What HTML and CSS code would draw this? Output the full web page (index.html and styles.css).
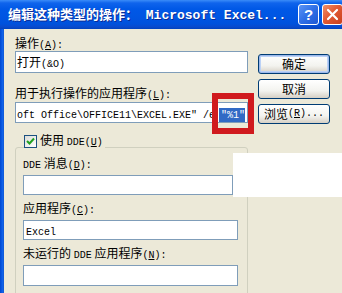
FILE: index.html
```html
<!DOCTYPE html>
<html>
<head>
<meta charset="utf-8">
<link rel="stylesheet" href="styles.css">
</head>
<body>
<div class="win">
  <div class="titlebar">
    <span class="title"><span class="tcn">编辑这种类型的操作：</span><span class="tm"> Microsoft Excel...</span></span>
    <span class="tbtn help">?</span>
    <span class="tbtn close"><svg width="13" height="13" viewBox="0 0 13 13"><path d="M2 2 L11 11 M11 2 L2 11" stroke="#fff" stroke-width="2.2" stroke-linecap="round"/></svg></span>
  </div>
  <div class="frame">
    <div class="edge"></div>
    <div class="content">
      <div class="left">
        <div class="lbl lbl1">操作<span class="m">(<u>A</u>):</span></div>
        <div class="field f1">打开<span class="m">(&amp;O)</span></div>
        <div class="lbl lbl2">用于执行操作的应用程序<span class="m">(<u>L</u>):</span></div>
        <div class="field f2"><span class="m">oft Office\OFFICE11\EXCEL.EXE" /e <span class="sel">"%1"</span></span></div>
        <div class="group">
          <div class="chkrow">
            <span class="chk"><svg width="9" height="9" viewBox="0 0 9 9"><path d="M1 4 L3.5 6.5 L8 1.5" fill="none" stroke="#21A121" stroke-width="2"/></svg></span>
            <span>使用 <span class="m">DDE(<u>U</u>)</span></span>
          </div>
          <div class="lbl g1"><span class="m">DDE</span> 消息<span class="m">(<u>D</u>):</span></div>
          <div class="field gf w1"></div>
          <div class="lbl g2">应用程序<span class="m">(<u>C</u>):</span></div>
          <div class="field gf w2"><span class="m">Excel</span></div>
          <div class="lbl g2">未运行的 <span class="m">DDE</span> 应用程序<span class="m">(<u>N</u>):</span></div>
          <div class="field gf w2 last"></div>
        </div>
      </div>
      <div class="right">
        <div class="btn def">确定</div>
        <div class="btn">取消</div>
        <div class="btn">浏览<span class="m">(<u>R</u>)...</span></div>
      </div>
    </div>
  </div>
  <div class="redbox"></div>
  <div class="patch"></div>
</div>
</body>
</html>
```
FILE: styles.css
```css
html, body { margin: 0; padding: 0; }
body {
  width: 342px;
  height: 293px;
  overflow: hidden;
  background: #ECE9D8;
  font-family: "Noto Sans CJK SC", sans-serif;
  font-size: 12px;
  color: #000;
}
.win { position: relative; width: 342px; height: 293px; overflow: hidden; }
.m { font-family: "Liberation Mono", monospace; font-size: 10px; }
u { text-decoration: underline; text-underline-offset: 1px; }

.titlebar {
  height: 29px;
  display: flex;
  align-items: center;
  background: linear-gradient(#3B8CF8 0, #0F64EC 3px, #0058E6 9px, #0055E2 18px, #0052DC 24px, #0A4ACC 27px, #0043BE 29px);
  color: #fff;
  padding-left: 8px;
}
.title { flex: 1; white-space: nowrap; font-weight: bold; text-shadow: 1px 1px 0 #0B2C95; line-height: 16px; }
.tcn { font-size: 13px; }
.tm { font-family: "Liberation Mono", monospace; font-size: 13px; }
.tbtn {
  width: 21px; height: 21px;
  box-sizing: border-box;
  border: 1px solid #fff;
  border-radius: 3px;
  display: flex; align-items: center; justify-content: center;
  color: #fff;
  flex: none;
}
.help {
  background: linear-gradient(135deg, #5B94F5 0%, #2F6FE6 50%, #1E58D4 100%);
  font-family: "Liberation Sans", sans-serif; font-weight: bold; font-size: 15px;
  margin-right: 3px;
}
.close {
  background: linear-gradient(135deg, #F0906A 0%, #E25A34 45%, #C8401E 100%);
  margin-right: -1px;
}

.frame { display: flex; height: 264px; }
.edge { width: 4px; flex: none; background: linear-gradient(90deg, #0047D0, #0A5CE6 2px, #1566EB 3px, #0E52C8); }
.content { display: flex; padding-left: 11px; }
.left { width: 233px; flex: none; }
.right { margin-left: 10px; padding-top: 25px; display: flex; flex-direction: column; gap: 5px; }

.lbl { height: 14px; line-height: 14px; white-space: nowrap; }
.lbl1 { margin-top: 7px; }
.lbl2 { margin-top: 13px; }
.field {
  box-sizing: border-box;
  background: #fff;
  border: 1px solid #7F9DB9;
  white-space: nowrap;
  overflow: hidden;
  line-height: 18px;
}
.f1 { margin-top: 1px; height: 22px; padding-left: 1px; line-height: 20px; }
.f2 { margin-top: 2px; height: 21px; padding-left: 1px; line-height: 19px; }
.sel { background: #316AC5; color: #fff; padding: 2px 0 3px 2px; margin-left: -2px; }

.group {
  margin-top: 24px;
  height: 160px;
  border: 1px solid #D0D0BF;
  border-radius: 3px;
  padding-left: 7px;
}
.chkrow {
  margin-top: -14px;
  margin-left: 1px;
  height: 15px;
  width: fit-content;
  background: #ECE9D8;
  display: flex;
  align-items: center;
  gap: 3px;
  padding-right: 2px;
  line-height: 14px;
}
.chk {
  width: 13px; height: 13px;
  box-sizing: border-box;
  border: 1px solid #1C5180;
  background: linear-gradient(135deg, #DCDCD7, #FFFFFF);
  display: flex; align-items: center; justify-content: center;
}
.g1 { margin-top: 7px; }
.g2 { margin-top: 6px; }
.gf { margin-top: 5px; height: 20px; padding-left: 2px; }
.w1 { width: 210px; }
.w2 { width: 215px; }
.last { height: 21px; }

.btn {
  width: 72px; height: 20px;
  box-sizing: border-box;
  border: 1px solid #003C74;
  border-radius: 3px;
  background: linear-gradient(#FFFFFF, #F3F3EF 60%, #D6D0C5);
  display: flex; align-items: center; justify-content: center;
  line-height: 14px;
  white-space: nowrap;
}
.def { box-shadow: inset 0 0 0 1px #9DB9EB, inset 0 0 0 2px #BCD2F6; }

.redbox {
  position: absolute;
  left: 212px; top: 93px;
  width: 42px; height: 41px;
  box-sizing: border-box;
  border: 6px solid #D01A1E;
}
.patch {
  position: absolute;
  left: 233px; top: 153px;
  width: 109px; height: 44px;
  background: #fff;
}
```
